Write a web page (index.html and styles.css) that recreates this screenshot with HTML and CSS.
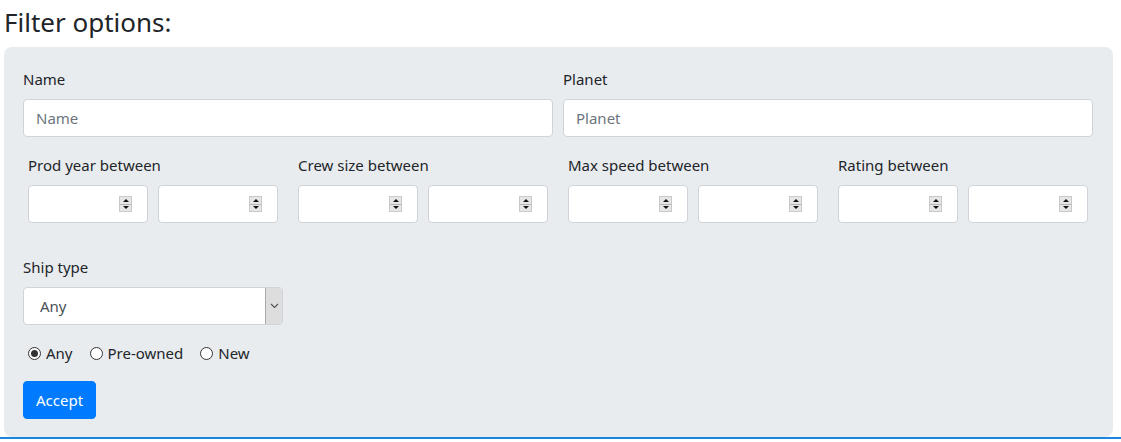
FILE: index.html
```html
<!DOCTYPE html>
<html>
<head>
<meta charset="utf-8">
<link rel="stylesheet" href="styles.css">
</head>
<body>
<h3 class="title">Filter options:</h3>
<form class="panel">
  <div class="row2">
    <div class="group">
      <label class="lbl">Name</label>
      <input class="ctrl" type="text" placeholder="Name">
    </div>
    <div class="group">
      <label class="lbl">Planet</label>
      <input class="ctrl" type="text" placeholder="Planet">
    </div>
  </div>

  <div class="ranges">
    <div class="range">
      <label class="lbl">Prod year between</label>
      <div class="pair">
        <div class="num"><input type="text"><span class="spin"><i class="up"></i><i class="dn"></i></span></div>
        <div class="num"><input type="text"><span class="spin"><i class="up"></i><i class="dn"></i></span></div>
      </div>
    </div>
    <div class="range">
      <label class="lbl">Crew size between</label>
      <div class="pair">
        <div class="num"><input type="text"><span class="spin"><i class="up"></i><i class="dn"></i></span></div>
        <div class="num"><input type="text"><span class="spin"><i class="up"></i><i class="dn"></i></span></div>
      </div>
    </div>
    <div class="range">
      <label class="lbl">Max speed between</label>
      <div class="pair">
        <div class="num"><input type="text"><span class="spin"><i class="up"></i><i class="dn"></i></span></div>
        <div class="num"><input type="text"><span class="spin"><i class="up"></i><i class="dn"></i></span></div>
      </div>
    </div>
    <div class="range">
      <label class="lbl">Rating between</label>
      <div class="pair">
        <div class="num"><input type="text"><span class="spin"><i class="up"></i><i class="dn"></i></span></div>
        <div class="num"><input type="text"><span class="spin"><i class="up"></i><i class="dn"></i></span></div>
      </div>
    </div>
  </div>

  <div class="row4">
    <div class="group">
      <label class="lbl">Ship type</label>
      <div class="select">
        <span class="sel-val">Any</span>
        <span class="sel-arrow"><svg width="9" height="6" viewBox="0 0 9 6"><path d="M1 1 L4.5 4.5 L8 1" fill="none" stroke="#555" stroke-width="1.1"/></svg></span>
      </div>
    </div>
  </div>

  <div class="radios">
    <label class="radio"><span class="dot checked"></span>Any</label>
    <label class="radio"><span class="dot"></span>Pre-owned</label>
    <label class="radio"><span class="dot"></span>New</label>
  </div>

  <button type="button" class="btn">Accept</button>
</form>
<div class="rule"></div>
</body>
</html>
```

FILE: styles.css
```css
html, body {
  margin: 0;
  padding: 0;
  background: #fff;
}
body {
  padding: 5px 8px 0 4px;
  font-family: "Noto Sans", "Open Sans", sans-serif;
  font-size: 15px;
  line-height: 24px;
  color: #212529;
}
.title {
  margin: 0 0 8px 0;
  font-size: 26px;
  line-height: 34px;
  font-weight: 400;
}
.panel {
  background: #e9ecef;
  border-radius: 8px;
  padding: 20px 20px 18px 19px;
  margin: 0;
}
.lbl {
  display: block;
  margin-bottom: 8px;
  height: 24px;
}
.row2 {
  display: grid;
  grid-template-columns: 1fr 1fr;
  margin: 0 -5px;
}
.row2 .group {
  padding: 0 5px;
  margin-bottom: 16px;
}
.ctrl {
  display: block;
  box-sizing: border-box;
  width: 100%;
  height: 38px;
  padding: 6px 12px;
  border: 1px solid #ced4da;
  border-radius: 4px;
  background: #fff;
  font: inherit;
  color: #495057;
  outline: none;
}
.ctrl::placeholder {
  color: #6c757d;
}
.ranges {
  display: grid;
  grid-template-columns: repeat(4, 1fr);
  margin: 0 -5px 32px;
}
.range {
  padding: 0 10px;
}
.pair {
  display: grid;
  grid-template-columns: 1fr 1fr;
  gap: 10px;
}
.num {
  box-sizing: border-box;
  height: 38px;
  display: flex;
  align-items: center;
  border: 1px solid #ced4da;
  border-radius: 4px;
  background: #fff;
  min-width: 0;
}
.num input {
  flex: 1;
  min-width: 0;
  border: 0;
  outline: none;
  background: transparent;
  font: inherit;
  padding: 0 12px;
}
.spin {
  width: 13px;
  height: 16px;
  margin-right: 15px;
  box-sizing: border-box;
  border: 1px solid #c9c9c9;
  background: #e6e6e6;
  display: flex;
  flex-direction: column;
  flex-shrink: 0;
}
.spin i {
  flex: 1;
  display: flex;
  align-items: center;
  justify-content: center;
}
.spin .up {
  border-bottom: 1px solid #b5b5b5;
}
.spin .up::before {
  content: "";
  border-left: 3px solid transparent;
  border-right: 3px solid transparent;
  border-bottom: 3px solid #111;
}
.spin .dn::before {
  content: "";
  border-left: 3px solid transparent;
  border-right: 3px solid transparent;
  border-top: 3px solid #111;
}
.row4 {
  display: grid;
  grid-template-columns: repeat(4, 1fr);
  margin: 0 -5px;
}
.row4 .group {
  padding: 0 5px;
  margin-bottom: 16px;
}
.select {
  box-sizing: border-box;
  height: 38px;
  display: flex;
  align-items: stretch;
  border: 1px solid #ced4da;
  border-radius: 4px;
  background: #fff;
  overflow: hidden;
}
.sel-val {
  flex: 1;
  display: flex;
  align-items: center;
  padding-left: 16px;
  color: #495057;
}
.sel-arrow {
  width: 16px;
  background: #dddddd;
  border-left: 1px solid #aaa;
  display: flex;
  align-items: center;
  justify-content: center;
}
.radios {
  display: flex;
  padding-left: 5px;
  margin-bottom: 16px;
}
.radio {
  display: flex;
  align-items: center;
  margin-right: 17px;
}
.dot {
  box-sizing: border-box;
  width: 13px;
  height: 13px;
  border: 1px solid #333;
  border-radius: 50%;
  background: #fff;
  margin-right: 5px;
  display: flex;
  align-items: center;
  justify-content: center;
}
.dot.checked::before {
  content: "";
  width: 7px;
  height: 7px;
  border-radius: 50%;
  background: #333;
}
.btn {
  display: block;
  height: 38px;
  padding: 6px 12px;
  border: 1px solid #007bff;
  border-radius: 4px;
  background: #007bff;
  color: #fff;
  font: inherit;
  line-height: 24px;
}
.rule {
  height: 2px;
  background: #1b86e0;
  margin: 0 -8px 0 -4px;
}
```
